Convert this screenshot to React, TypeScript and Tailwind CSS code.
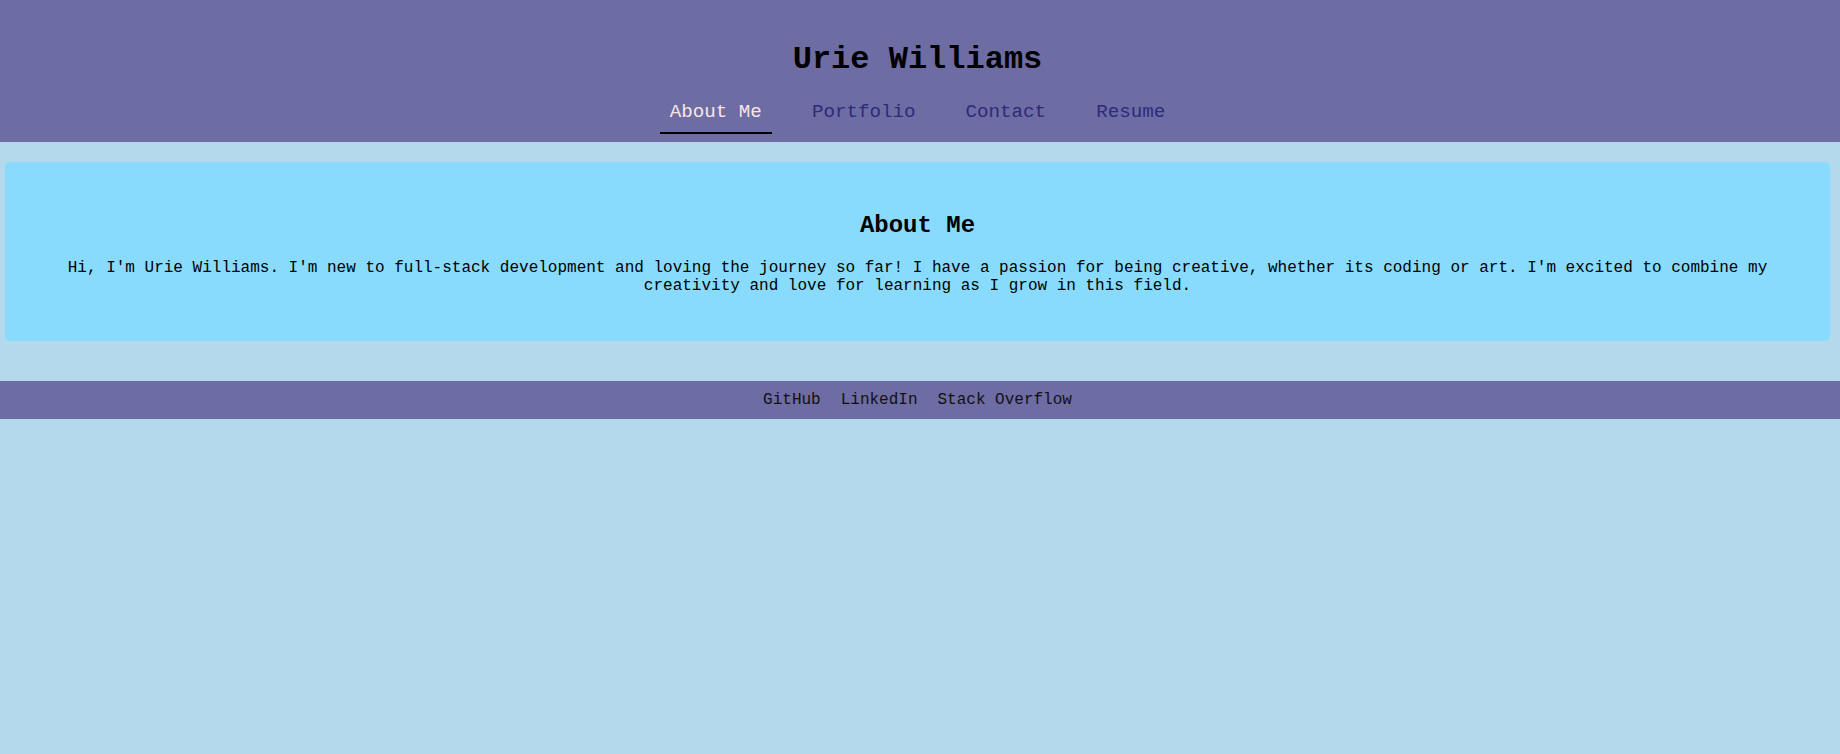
import React from "react";

const navItems = ["About Me", "Portfolio", "Contact", "Resume"];
const footerLinks = ["GitHub", "LinkedIn", "Stack Overflow"];

const Header = () => {
  return (
    <header className="bg-[#6d6ca3] pt-[42px] pb-[8px] pr-[5px] text-center">
      <h1 className="text-[32px] leading-[36px] font-bold text-black">
        Urie Williams
      </h1>
      <nav className="mt-[13px] flex justify-center gap-[30px]">
        {navItems.map((item, i) => (
          <a
            key={item}
            href="#"
            className={
              i === 0
                ? "px-[10px] pt-[10px] pb-[9px] text-[19.2px] leading-[22px] text-[#f9e6e2] border-b-2 border-black"
                : "px-[10px] pt-[10px] pb-[9px] text-[19.2px] leading-[22px] text-[#2c2b7c] border-b-2 border-transparent"
            }
          >
            {item}
          </a>
        ))}
      </nav>
    </header>
  );
};

const About = () => {
  return (
    <section className="mt-[20px] ml-[5px] mr-[10px] rounded-[5px] bg-[#88dbfc] p-[30px] text-center">
      <h2 className="my-[20px] text-[24px] leading-[27px] font-bold text-black">
        About Me
      </h2>
      <p className="my-[16px] text-[16px] leading-[18px] text-black">
        Hi, I'm Urie Williams. I'm new to full-stack development and loving the
        journey so far! I have a passion for being creative, whether its coding
        or art. I'm excited to combine my creativity and love for learning as I
        grow in this field.
      </p>
    </section>
  );
};

const Footer = () => {
  return (
    <footer className="mt-[40px] bg-[#6d6ca3] py-[10px] pr-[5px] flex justify-center gap-[20px]">
      {footerLinks.map((link) => (
        <a key={link} href="#" className="text-[16px] leading-[18px] text-[#111]">
          {link}
        </a>
      ))}
    </footer>
  );
};

export default function App() {
  return (
    <div className="min-h-[754px] bg-[#b4d9ec] font-['Liberation_Mono','Courier_New',monospace]">
      <Header />
      <About />
      <Footer />
    </div>
  );
}
